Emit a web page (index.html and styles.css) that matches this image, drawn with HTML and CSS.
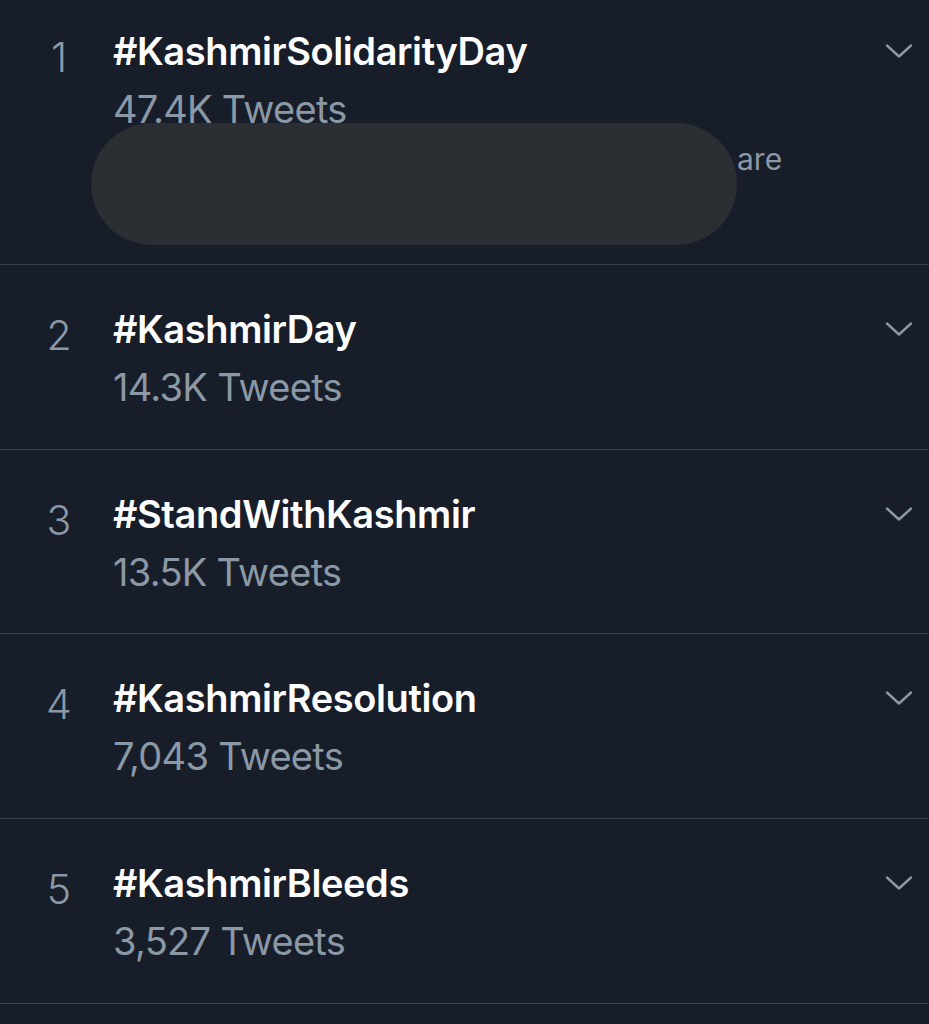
FILE: index.html
```html
<!DOCTYPE html>
<html lang="en">
<head>
<meta charset="utf-8">
<title>Trends</title>
<link rel="stylesheet" href="styles.css">
</head>
<body>
<ol class="trends">
  <li class="trend trend-first">
    <span class="rank">1</span>
    <div class="body">
      <div class="title">#KashmirSolidarityDay</div>
      <div class="count">47.4K Tweets</div>
      <p class="desc"><span class="redact" aria-hidden="true"></span><span>are</span></p>
    </div>
    <svg class="chev" viewBox="0 0 28 16" width="28" height="16" aria-hidden="true"><path d="M2 2.5 L14 13.5 L26 2.5"/></svg>
  </li>
  <li class="trend">
    <span class="rank">2</span>
    <div class="body">
      <div class="title">#KashmirDay</div>
      <div class="count">14.3K Tweets</div>
    </div>
    <svg class="chev" viewBox="0 0 28 16" width="28" height="16" aria-hidden="true"><path d="M2 2.5 L14 13.5 L26 2.5"/></svg>
  </li>
  <li class="trend">
    <span class="rank">3</span>
    <div class="body">
      <div class="title">#StandWithKashmir</div>
      <div class="count">13.5K Tweets</div>
    </div>
    <svg class="chev" viewBox="0 0 28 16" width="28" height="16" aria-hidden="true"><path d="M2 2.5 L14 13.5 L26 2.5"/></svg>
  </li>
  <li class="trend">
    <span class="rank">4</span>
    <div class="body">
      <div class="title">#KashmirResolution</div>
      <div class="count">7,043 Tweets</div>
    </div>
    <svg class="chev" viewBox="0 0 28 16" width="28" height="16" aria-hidden="true"><path d="M2 2.5 L14 13.5 L26 2.5"/></svg>
  </li>
  <li class="trend">
    <span class="rank">5</span>
    <div class="body">
      <div class="title">#KashmirBleeds</div>
      <div class="count">3,527 Tweets</div>
    </div>
    <svg class="chev" viewBox="0 0 28 16" width="28" height="16" aria-hidden="true"><path d="M2 2.5 L14 13.5 L26 2.5"/></svg>
  </li>
</ol>
</body>
</html>
```
FILE: styles.css
```css
html, body {
  margin: 0;
  padding: 0;
  background: #171e2a;
}
body {
  font-family: Inter, "Liberation Sans", sans-serif;
  color: #ffffff;
  overflow: hidden;
}
.trends {
  list-style: none;
  margin: 0;
  padding: 0;
}
.trend {
  display: flex;
  align-items: flex-start;
  padding: 42px 16px 39.75px 0;
  border-bottom: 1px solid #363e4a;
}
.trend-first {
  padding-top: 29px;
  padding-bottom: 42.75px;
}
.rank {
  flex: none;
  width: 108px;
  padding-left: 5px;
  margin-top: 6px;
  text-align: center;
  font-size: 41px;
  font-weight: 300;
  line-height: 44px;
  color: #8b98a5;
}
.body {
  flex: 1;
  min-width: 0;
}
.title {
  font-size: 38px;
  font-weight: 600;
  line-height: 44px;
  letter-spacing: -0.4px;
  color: #ffffff;
}
.count {
  margin-top: 14px;
  font-size: 38px;
  font-weight: 400;
  line-height: 44px;
  letter-spacing: -0.7px;
  color: #8b98a5;
}
.desc {
  display: flex;
  align-items: flex-start;
  margin: 10px 0 44px 0;
  font-size: 30px;
  line-height: 36px;
  color: #8b98a5;
}
.redact {
  flex: none;
  width: 646px;
  height: 122px;
  margin: -18px 0 -68px -22px;
  border-radius: 61px;
  background: #2b2e33;
}
.chev {
  flex: none;
  margin-top: 14px;
  fill: none;
  stroke: #8b98a5;
  stroke-width: 2.4;
  stroke-linecap: round;
  stroke-linejoin: round;
}
```
